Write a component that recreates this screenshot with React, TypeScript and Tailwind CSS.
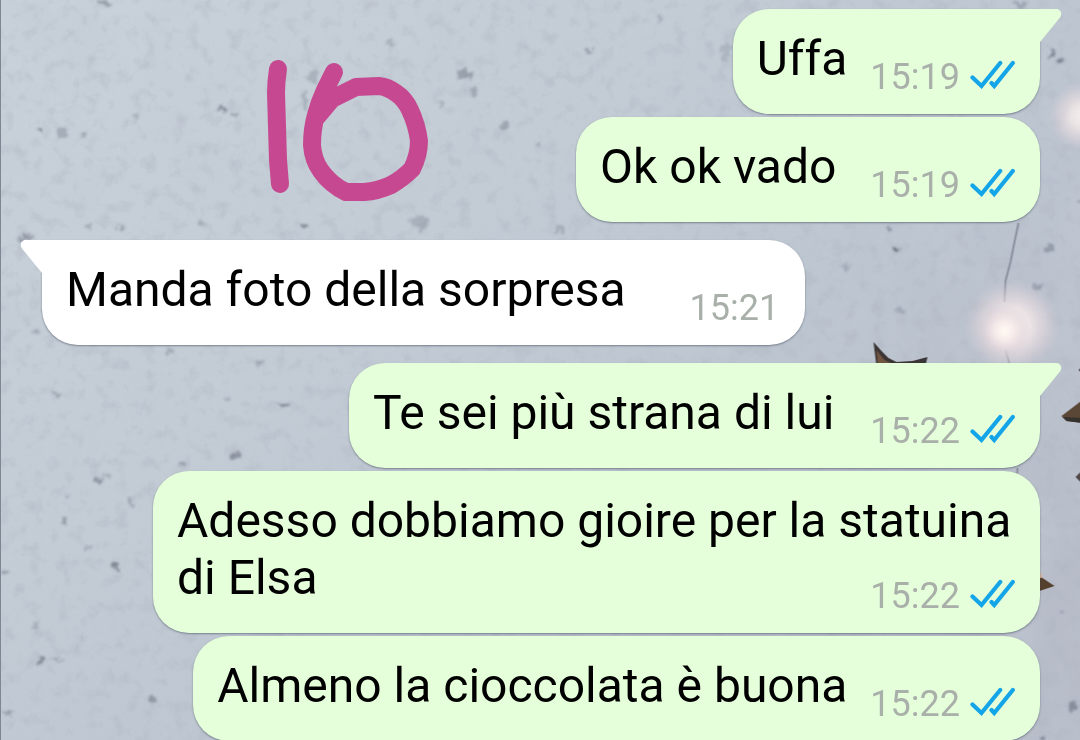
type Message = {
  text: string;
  time: string;
  outgoing: boolean;
  firstOfGroup?: boolean;
  stacked?: boolean;
  spacing: string;
};

const messages: Message[] = [
  { text: "Uffa", time: "15:19", outgoing: true, firstOfGroup: true, spacing: "gap-[23px]" },
  { text: "Ok ok vado", time: "15:19", outgoing: true, spacing: "gap-[34px]" },
  { text: "Manda foto della sorpresa", time: "15:21", outgoing: false, firstOfGroup: true, spacing: "gap-16" },
  { text: "Te sei più strana di lui", time: "15:22", outgoing: true, firstOfGroup: true, spacing: "gap-9" },
  { text: "Adesso dobbiamo gioire per la statuina di Elsa", time: "15:22", outgoing: true, stacked: true, spacing: "" },
  { text: "Almeno la cioccolata è buona", time: "15:22", outgoing: true, spacing: "gap-[23px]" },
];

/* Small pits in the concrete: x, y, horizontal radius, vertical radius, opacity */
const pits = [
  [104, 3, 7, 3, 0.4], [40, 131, 2, 3, 0.6], [62, 133, 5, 6, 0.3], [83, 135, 3, 3, 0.35],
  [136, 117, 3, 3, 0.25], [222, 110, 4, 3, 0.5], [236, 115, 4, 2, 0.4], [305, 100, 3, 9, 0.3],
  [312, 77, 5, 6, 0.25], [303, 226, 4, 2, 0.6], [120, 227, 4, 3, 0.35], [88, 226, 3, 3, 0.3],
  [201, 223, 4, 3, 0.3], [25, 238, 8, 2, 0.45], [465, 75, 7, 5, 0.4], [474, 91, 3, 5, 0.3],
  [589, 50, 4, 2, 0.5], [505, 125, 4, 4, 0.35], [420, 222, 9, 8, 0.25], [388, 42, 4, 4, 0.25],
  [440, 105, 2, 2, 0.35], [537, 145, 3, 4, 0.25], [36, 333, 4, 3, 0.3], [57, 395, 4, 3, 0.35],
  [227, 398, 4, 2, 0.3], [283, 404, 6, 3, 0.6], [234, 455, 5, 4, 0.5], [182, 464, 4, 3, 0.4],
  [97, 481, 4, 4, 0.5], [106, 476, 4, 2, 0.3], [63, 521, 3, 3, 0.45], [130, 502, 3, 4, 0.3],
  [66, 497, 2, 2, 0.4], [115, 566, 3, 4, 0.6], [88, 548, 3, 3, 0.25], [3, 572, 3, 3, 0.4],
  [35, 627, 4, 3, 0.25], [40, 659, 2, 4, 0.6], [56, 659, 8, 2, 0.25], [152, 699, 4, 3, 0.5],
  [8, 713, 4, 3, 0.4], [83, 638, 3, 3, 0.25], [170, 352, 5, 4, 0.3], [260, 362, 6, 3, 0.3],
  [896, 249, 3, 3, 0.85], [889, 228, 3, 2, 0.5], [1051, 53, 3, 3, 0.6], [1059, 61, 4, 2, 0.6],
  [1049, 248, 4, 5, 0.4], [1037, 288, 4, 5, 0.35], [1079, 202, 2, 3, 0.6], [1073, 706, 4, 4, 0.5],
  [1041, 738, 2, 3, 0.6], [1061, 612, 3, 3, 0.35], [1020, 4, 7, 3, 0.3], [726, 52, 5, 8, 0.2],
  [900, 310, 5, 3, 0.25], [660, 19, 3, 3, 0.25], [560, 229, 6, 4, 0.25], [846, 266, 3, 4, 0.25],
];

function Wallpaper() {
  return (
    <svg
      aria-hidden="true"
      className="absolute inset-0 -z-10 h-full w-full"
      viewBox="0 0 1080 740"
      preserveAspectRatio="xMidYMin slice"
    >
      <defs>
        <linearGradient id="wall" x1="0" y1="0" x2="1" y2="0.8">
          <stop offset="0" stopColor="#c9d2da" />
          <stop offset="0.4" stopColor="#c3ccd5" />
          <stop offset="0.65" stopColor="#bcc5d0" />
          <stop offset="1" stopColor="#b7bcc8" />
        </linearGradient>
        <radialGradient id="glow">
          <stop offset="0" stopColor="#fffaf4" />
          <stop offset="0.35" stopColor="#f8eceb" stopOpacity="0.9" />
          <stop offset="0.65" stopColor="#e8dadf" stopOpacity="0.6" />
          <stop offset="1" stopColor="#cfc7d1" stopOpacity="0" />
        </radialGradient>
        <filter id="mottle" x="0" y="0" width="100%" height="100%">
          <feTurbulence type="fractalNoise" baseFrequency="0.02 0.014" numOctaves="5" seed="8" />
          <feColorMatrix values="0 0 0 0 0.54  0 0 0 0 0.59  0 0 0 0 0.66  1.7 0 0 0 -0.65" />
        </filter>
        <filter id="grain" x="0" y="0" width="100%" height="100%">
          <feTurbulence type="fractalNoise" baseFrequency="0.07" numOctaves="4" seed="21" />
          <feColorMatrix values="0 0 0 0 0.42  0 0 0 0 0.46  0 0 0 0 0.53  0 1.5 0 0 -0.75" />
          <feGaussianBlur stdDeviation="0.6" />
        </filter>
        <filter id="rough" x="0" y="0" width="1080" height="740" filterUnits="userSpaceOnUse">
          <feTurbulence type="fractalNoise" baseFrequency="0.16" numOctaves="2" seed="4" />
          <feDisplacementMap in="SourceGraphic" scale="12" xChannelSelector="R" yChannelSelector="G" />
          <feGaussianBlur stdDeviation="1" />
        </filter>
        <filter id="edge">
          <feGaussianBlur stdDeviation="0.7" />
        </filter>
      </defs>
      <rect width="1080" height="740" fill="url(#wall)" />
      <rect width="1080" height="740" filter="url(#mottle)" opacity="0.6" />
      <rect width="1080" height="740" filter="url(#grain)" opacity="0.8" />
      <g fill="#4d5564" filter="url(#rough)">
        {pits.map(([x, y, rx, ry, opacity]) => (
          <ellipse key={`${x}-${y}`} cx={x} cy={y} rx={rx} ry={ry} opacity={opacity * 0.9} />
        ))}
      </g>
      <path d="M1018 223L1014 242L1010 262L1005 281L1004 302M1005 350L1009 364M1017 468L1016 480" fill="none" stroke="#8b909d" strokeWidth="2" filter="url(#edge)" />
      <ellipse cx="1012" cy="326" rx="50" ry="48" fill="url(#glow)" opacity="0.9" />
      <circle cx="1004" cy="331" r="26" fill="url(#glow)" />
      <circle cx="1083" cy="116" r="36" fill="url(#glow)" opacity="0.85" />
      <g filter="url(#edge)">
        <path d="M873 342L881 351L888 358L896 362L912 361L927 357L923 374H877Z" fill="#3b3435" />
        <path d="M876 350L884 360L892 364V372H878Z" fill="#70563f" />
        <path d="M1082 400L1061 416L1066 421L1082 423Z" fill="#5a4636" />
        <path d="M1062 417L1082 418V423L1066 421Z" fill="#36302f" />
        <path d="M1082 366L1078 370L1082 374ZM1082 470L1075 477L1082 484Z" fill="#514746" />
        <path d="M1036 574L1054 586L1036 592Z" fill="#54402f" />
        <path d="M1038 568L1042 577L1036 580Z" fill="#d9b39c" />
      </g>
    </svg>
  );
}

function Handwriting() {
  return (
    <svg
      role="img"
      aria-label="10"
      className="absolute top-14 left-[255px]"
      width="180"
      height="152"
      viewBox="256 56 180 152"
      fill="none"
      stroke="#c64891"
      strokeWidth="18"
      strokeLinecap="round"
      strokeLinejoin="round"
    >
      <path d="M278 69Q276 82 276 93L278 160L280 184" />
      <path d="M334 72L325 90Q319 103 316 115Q312 129 312 145Q313 160 321 171Q331 185 346 192H364Q378 191 391 185Q402 179 412 169Q419 155 419 141Q417 125 410 110Q405 99 396 93Q388 87 379 86L356 87L332 99L316 118" />
    </svg>
  );
}

function ReadTicks() {
  return (
    <svg
      role="img"
      aria-label="Letto"
      width="46"
      height="30"
      viewBox="0 0 46 30"
      fill="none"
      stroke="#14a5e8"
      strokeWidth="4.2"
      strokeLinecap="round"
      strokeLinejoin="miter"
    >
      <path d="M3.5 17.5L12.500 26L31.200 3M22.500 23L25.200 26L43.800 3" />
    </svg>
  );
}

function Tail({ outgoing }: { outgoing: boolean }) {
  return (
    <svg
      aria-hidden="true"
      className={
        outgoing
          ? "absolute top-0 left-full fill-[#e5ffdb]"
          : "absolute top-0 right-full -scale-x-100 fill-white"
      }
      width="22"
      height="34"
      viewBox="0 0 22 34"
    >
      <path d="M0 0H16C20 0 23 4 20 8.500L0 33Z" />
    </svg>
  );
}

function Meta({ message, className }: { message: Message; className: string }) {
  return (
    <span className={`flex items-end gap-[9px] pb-4 ${className}`}>
      <time className="text-[36px] leading-[42px] text-[#a9afa9]">{message.time}</time>
      {message.outgoing && (
        <span className="pb-2">
          <ReadTicks />
        </span>
      )}
    </span>
  );
}

function Bubble({ message }: { message: Message }) {
  const { outgoing, firstOfGroup, stacked } = message;
  const side = outgoing
    ? "self-end bg-[#e5ffdb] pr-[25px]"
    : "self-start bg-white pr-[26px]";
  const corner = !firstOfGroup
    ? "rounded-[36px]"
    : outgoing
      ? "rounded-[36px] rounded-tr-none"
      : "rounded-[36px] rounded-tl-none";
  const arrangement = stacked ? "flow-root max-w-[887px]" : `flex items-end ${message.spacing}`;
  return (
    <li
      className={`relative pt-[21px] pl-6 text-[48px] leading-[57px] text-black shadow-[0_1px_2px_rgba(60,70,85,0.55)] ${side} ${corner} ${arrangement}`}
    >
      {firstOfGroup && <Tail outgoing={outgoing} />}
      {stacked ? (
        <>
          <span>{message.text}</span>
          <Meta message={message} className="float-right mt-[26px]" />
        </>
      ) : (
        <>
          <p className="pb-[27px]">{message.text}</p>
          <Meta message={message} className="" />
        </>
      )}
    </li>
  );
}

export default function App() {
  const groups = [messages.slice(0, 2), messages.slice(2, 3), messages.slice(3)];
  return (
    <main className="relative isolate h-screen overflow-hidden border-l border-[#7d8693] bg-[#bdc5d0] font-[Roboto,sans-serif]">
      <Wallpaper />
      <Handwriting />
      <div className="flex flex-col gap-[18px] pt-[9px] pr-10 pl-[41px]">
        {groups.map((group) => (
          <ul key={group[0].text} className="flex flex-col gap-[3px]">
            {group.map((message) => (
              <Bubble key={message.text} message={message} />
            ))}
          </ul>
        ))}
      </div>
    </main>
  );
}
